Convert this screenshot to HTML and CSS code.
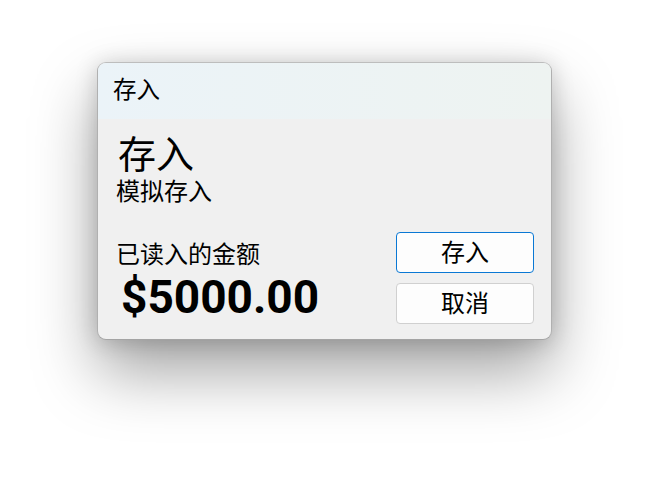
FILE: index.html
```html
<!DOCTYPE html>
<html lang="zh-CN">
<head>
<meta charset="utf-8">
<link rel="stylesheet" href="styles.css">
</head>
<body>
<div class="stage">
  <div class="window">
    <div class="titlebar">存入</div>
    <div class="content">
      <div class="heading">存入</div>
      <div class="subtitle">模拟存入</div>
      <div class="bottom">
        <div class="amount-col">
          <div class="label">已读入的金额</div>
          <div class="amount">$5000.00</div>
        </div>
        <div class="buttons">
          <button class="btn btn-primary">存入</button>
          <button class="btn">取消</button>
        </div>
      </div>
    </div>
  </div>
</div>
</body>
</html>
```

FILE: styles.css
```css
html, body {
  margin: 0;
  padding: 0;
  background: #ffffff;
}
body {
  font-family: "Liberation Sans", "Noto Sans CJK SC", sans-serif;
  color: #000;
}
.stage {
  width: 648px;
  height: 500px;
  padding: 62px 0 0 97px;
  box-sizing: border-box;
}
.window {
  width: 455px;
  height: 278px;
  box-sizing: border-box;
  border: 1px solid #b0b0b0;
  border-color: #bdbdbd #b0b0b0 #a4a4a4 #b0b0b0;
  border-radius: 9px;
  background: #f0f0f0;
  overflow: hidden;
  display: flex;
  flex-direction: column;
  box-shadow: 0 32px 64px rgba(0,0,0,0.36), 0 2px 22px rgba(0,0,0,0.18);
}
.titlebar {
  height: 56px;
  flex: none;
  background: linear-gradient(90deg, #ebf3f8, #eef3f1);
  font-size: 23.5px;
  line-height: 54px;
  padding-left: 15px;
}
.content {
  padding: 17px 17px 15px 18px;
  display: flex;
  flex-direction: column;
}
.heading {
  font-size: 38px;
  line-height: 38px;
  margin-left: 2px;
}
.subtitle {
  font-size: 24px;
  line-height: 24px;
  margin-top: 6px;
}
.bottom {
  margin-top: 28px;
  display: flex;
  justify-content: space-between;
  align-items: flex-start;
}
.amount-col {
  padding-top: 11px;
  display: flex;
  flex-direction: column;
}
.label {
  font-size: 24px;
  line-height: 24px;
}
.amount {
  font-family: Roboto, "Open Sans", sans-serif;
  font-weight: 700;
  font-size: 46px;
  line-height: 46px;
  margin-top: 7px;
  margin-left: 5px;
}
.buttons {
  display: flex;
  flex-direction: column;
  gap: 10px;
}
.btn {
  width: 138px;
  height: 41px;
  box-sizing: border-box;
  background: #fdfdfd;
  border: 1px solid #d0d0d0;
  border-radius: 4px;
  font-family: "Liberation Sans", "Noto Sans CJK SC", sans-serif;
  font-size: 24px;
  line-height: 1;
  color: #000;
  padding: 0;
}
.btn-primary {
  border-color: #0a78d4;
}
```
